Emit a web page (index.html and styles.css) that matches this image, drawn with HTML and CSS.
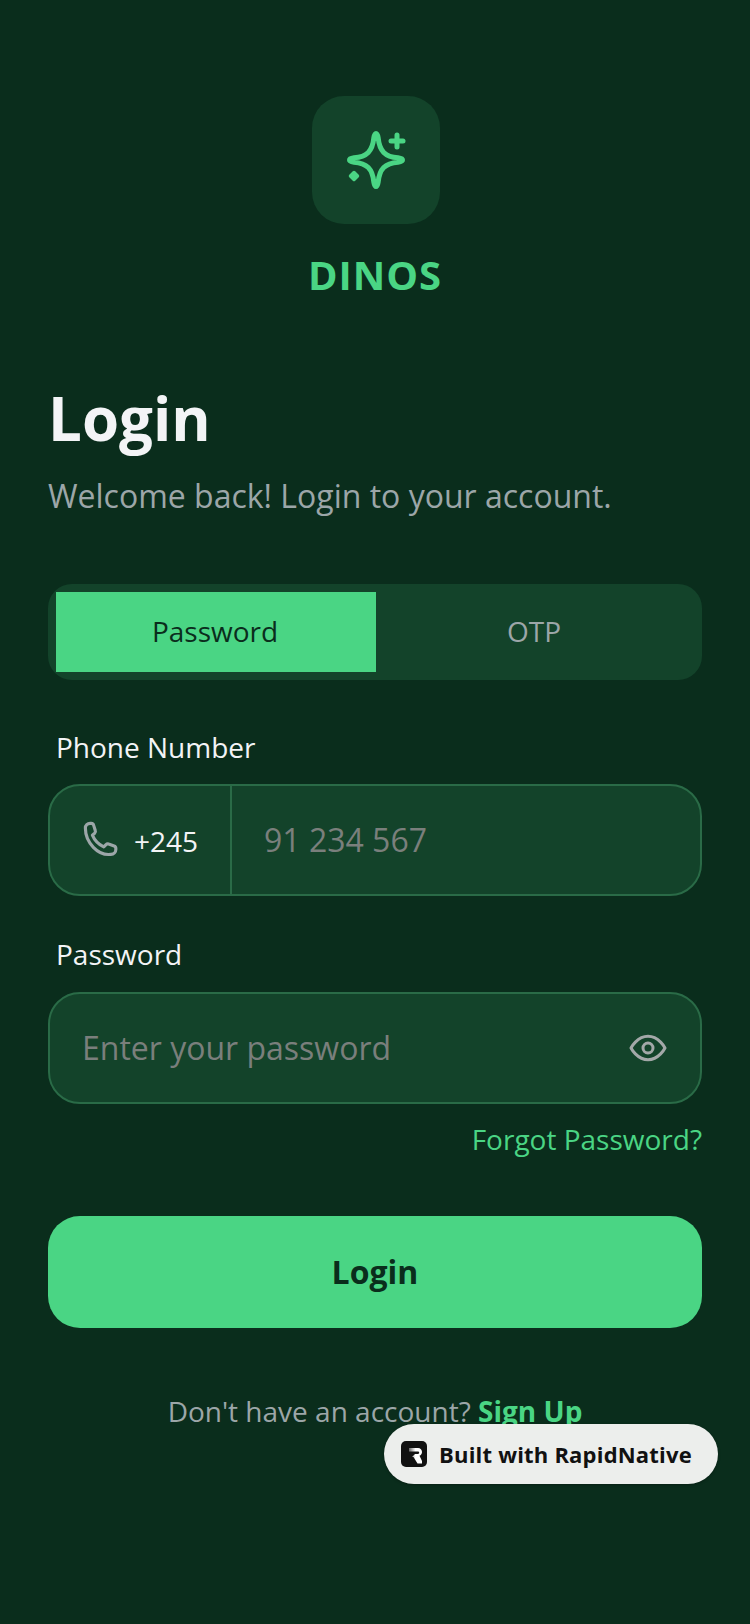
FILE: index.html
```html
<!DOCTYPE html>
<html lang="en">
<head>
    <meta charset="UTF-8">
    <meta name="viewport" content="width=device-width, initial-scale=1.0">
    <title>DINOS - Login</title>
    <link rel="stylesheet" href="styles.css">
</head>
<body>
    <div class="screen">
        <div class="brand">
            <div class="brand-icon">
                <svg width="64" height="64" viewBox="0 0 64 64" fill="none" stroke="#4ad584" stroke-width="5" stroke-linecap="round" stroke-linejoin="round">
                    <path d="M32 5.500C33.200 5.500 33.800 7.500 34.200 10C35.500 23 41 28.800 54 29.800C57 30.200 58.500 30.800 58.500 32C58.500 33.200 57 33.800 54 34.200C41 35.200 35.500 41 34.200 54C33.800 56.500 33.200 58.500 32 58.500C30.800 58.500 30.200 56.500 29.800 54C28.500 41 23 35.200 10 34.200C7 33.800 5.500 33.200 5.500 32C5.500 30.800 7 30.200 10 29.800C23 28.800 28.500 23 29.800 10C30.200 7.500 30.800 5.500 32 5.500Z"/>
                    <path d="M53 7v12"/>
                    <path d="M47 13h12"/>
                    <path d="M10 44.500l3.500 3.500-3.500 3.500-3.500-3.500z" fill="#4ad584" stroke-width="3.500"/>
                </svg>
            </div>
            <div class="brand-name">DINOS</div>
        </div>

        <h1 class="title">Login</h1>
        <p class="subtitle">Welcome back! Login to your account.</p>

        <div class="tabs">
            <div class="tab active">Password</div>
            <div class="tab">OTP</div>
        </div>

        <div class="field-label">Phone Number</div>
        <div class="input-box">
            <div class="prefix">
                <svg width="42" height="42" viewBox="0 0 24 24" fill="none" stroke="#9ca6a8" stroke-width="1.800" stroke-linecap="round" stroke-linejoin="round">
                    <path d="M2.500 5.200c0-1.600 1.200-2.700 2.700-2.700h.7c.6 0 1.100.4 1.300 1l1 3.200c.2.500 0 1-.4 1.400l-1.300 1.100c1.200 2.900 3.300 5.200 6.500 6.700l1.300-1.300c.4-.4 1-.5 1.500-.3l3.100 1.100c.6.200 1 .7 1 1.300v.7c0 1.600-1.200 2.800-2.800 2.800C9.800 21.200 2.500 13.500 2.500 5.200z"/>
                </svg>
                <span class="prefix-code">+245</span>
            </div>
            <div class="input-text">91 234 567</div>
        </div>

        <div class="field-label second">Password</div>
        <div class="input-box">
            <div class="input-text wide">Enter your password</div>
            <svg class="eye" width="40" height="40" viewBox="0 0 24 24" fill="none" stroke="#a3a8a8" stroke-width="1.800" stroke-linecap="round" stroke-linejoin="round">
                <path d="M1.800 12s3.600-7 10.200-7 10.200 7 10.200 7-3.600 7-10.200 7-10.200-7-10.200-7z"/>
                <circle cx="12" cy="12" r="3"/>
            </svg>
        </div>

        <div class="forgot">Forgot Password?</div>

        <div class="login-btn">Login</div>

        <div class="signup">Don't have an account? <b>Sign Up</b></div>
    </div>

    <div class="badge">
        <svg width="26" height="26" viewBox="0 0 26 26">
            <defs>
                <linearGradient id="r-fade" x1="0" y1="0" x2="1" y2="0">
                    <stop offset="0" stop-color="#666"/>
                    <stop offset="0.5" stop-color="#fff"/>
                </linearGradient>
            </defs>
            <rect width="26" height="26" rx="5" fill="#111"/>
            <path d="M8 7h9c2.500 0 4 1.800 4 4 0 1.800-1 3.200-2.500 3.800L21 20v2.500h-4.500l-4-6.500h-1.500l3-3h3c.8 0 1.200-.5 1.200-1.200s-.4-1.300-1.200-1.300H8z" fill="url(#r-fade)"/>
        </svg>
        <span>Built with RapidNative</span>
    </div>
</body>
</html>
```

FILE: styles.css
```css
body {
    margin: 0;
    height: 1624px;
    background-color: #0a2d1c;
    font-family: 'Open Sans', sans-serif;
    overflow: hidden;
    position: relative;
}

.screen {
    display: flex;
    flex-direction: column;
    padding: 96px 48px 0;
}

.brand {
    display: flex;
    flex-direction: column;
    align-items: center;
}

.brand-icon {
    width: 128px;
    height: 128px;
    margin-left: 2px;
    background-color: #13432a;
    border-radius: 32px;
    display: flex;
    justify-content: center;
    align-items: center;
}

.brand-name {
    margin-top: 24px;
    color: #4ad584;
    font-size: 40px;
    line-height: 54px;
    font-weight: 700;
    letter-spacing: 1px;
}

.title {
    margin: 80px 0 0;
    color: #f3f4f6;
    font-size: 60px;
    line-height: 72px;
    font-weight: 700;
}

.subtitle {
    margin: 18px 0 0;
    color: #9ca6a8;
    font-size: 32px;
    line-height: 48px;
}

.tabs {
    margin-top: 64px;
    height: 96px;
    box-sizing: border-box;
    padding: 8px;
    background-color: #13432a;
    border-radius: 24px;
    display: flex;
}

.tab {
    flex: 1;
    display: flex;
    justify-content: center;
    align-items: center;
    padding-bottom: 2px;
    padding-right: 2px;
    box-sizing: border-box;
    color: #9ca6a8;
    font-size: 28px;
}

.tab.active {
    flex: 0 0 320px;
    background-color: #4ad584;
    color: #0a2d1c;
}

.field-label {
    margin: 47px 8px 17px;
    color: #f3f4f6;
    font-size: 28px;
    line-height: 40px;
}

.field-label.second {
    margin-top: 38px;
    margin-bottom: 18px;
}

.input-box {
    height: 112px;
    box-sizing: border-box;
    background-color: #13432a;
    border: 2px solid #2a6b47;
    border-radius: 32px;
    display: flex;
    align-items: center;
}

.prefix {
    width: 182px;
    height: 100%;
    box-sizing: border-box;
    padding-left: 31px;
    border-right: 2px solid #2a6b47;
    display: flex;
    align-items: center;
    gap: 11px;
}

.prefix-code {
    padding-top: 2px;
    color: #f3f4f6;
    font-size: 28px;
}

.input-text {
    padding-left: 32px;
    padding-bottom: 2px;
    color: #7a7f7c;
    font-size: 32px;
}

.input-text.wide {
    flex: 1;
}

.eye {
    margin-right: 32px;
}

.forgot {
    margin-top: 15px;
    align-self: flex-end;
    color: #4ad584;
    font-size: 28px;
    line-height: 40px;
}

.login-btn {
    margin-top: 57px;
    height: 112px;
    box-sizing: border-box;
    padding-bottom: 2px;
    background-color: #4ad584;
    border-radius: 32px;
    display: flex;
    justify-content: center;
    align-items: center;
    color: #0a2d1c;
    font-size: 32px;
    font-weight: 700;
}

.signup {
    margin-top: 63px;
    text-align: center;
    color: #9ca6a8;
    font-size: 28px;
    line-height: 40px;
}

.signup b {
    color: #4ad584;
}

.badge {
    position: absolute;
    left: 384px;
    top: 1424px;
    width: 334px;
    height: 60px;
    box-sizing: border-box;
    padding-left: 17px;
    background-color: #eceeec;
    border-radius: 30px;
    display: flex;
    align-items: center;
    gap: 12px;
    color: #111;
    font-size: 22px;
    font-weight: 700;
    letter-spacing: 0.2px;
    box-shadow: 0 1px 3px rgba(0, 0, 0, 0.3);
}
```
